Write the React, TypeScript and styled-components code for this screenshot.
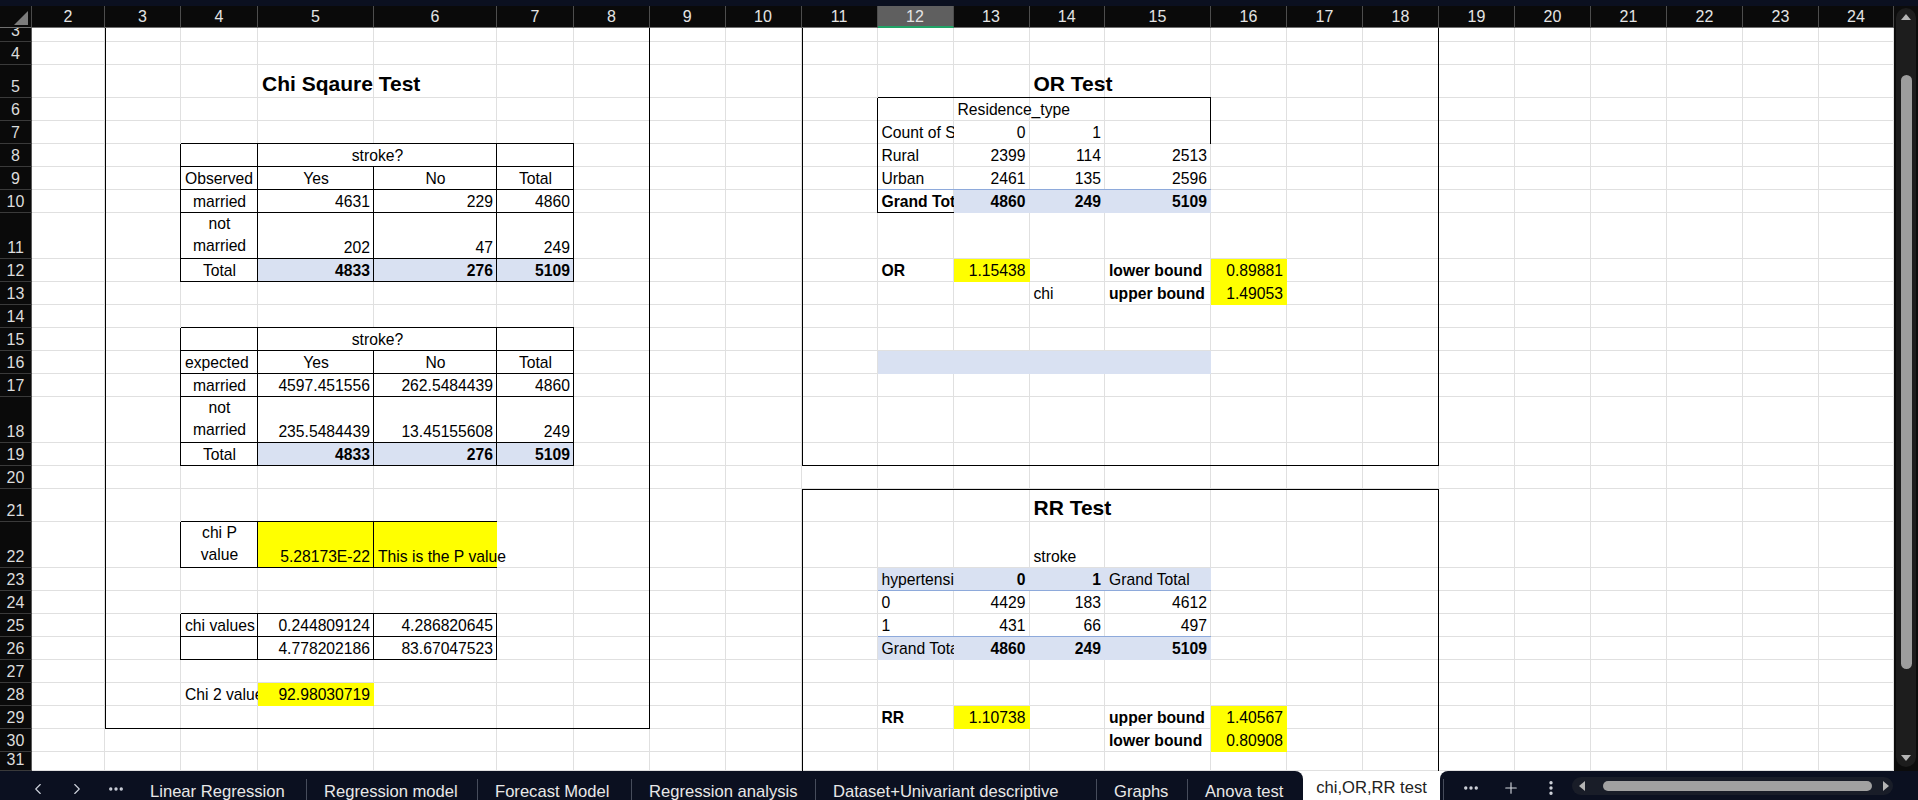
import React from 'react';
import styled, { createGlobalStyle } from 'styled-components';
import { ChevronLeft, ChevronRight, Ellipsis, EllipsisVertical, Plus } from 'lucide-react';

const NAVY = '#0b1020';
const BLUE = '#d9e1f2';
const YEL = '#ffff00';
const PIVOT_LINE = '#8eaadb';
const ALL = 'trbl';

// sheet geometry (px) - first entry is the row header column
const COLS = [32, 73, 76, 77, 116, 123, 77, 76, 75.5, 76, 76, 76, 76, 75.5, 106, 76, 76, 76, 76, 76, 76, 76, 76, 75];
const FIRST_ROW = 3;
const ROW_H = [14, 23, 33, 23, 23, 23, 23, 23, 46, 23, 23, 23, 23, 23, 23, 46, 23, 23, 33, 46, 23, 23, 23, 23, 23, 23, 23, 23, 19];
const COL_NUMS = Array.from({ length: 23 }, (_, i) => i + 2);
const ROW_NUMS = ROW_H.map((_, i) => i + FIRST_ROW);
const SELECTED_COL = 12;

const colTpl = COLS.map(w => `${w}px`).join(' ');
const rowTpl = [22, ...ROW_H].map(h => `${h}px`).join(' ');

const GlobalStyle = createGlobalStyle`
  html, body { margin: 0; padding: 0; background: ${NAVY}; }
  body {
    width: 1918px;
    height: 800px;
    overflow: hidden;
    font-family: "Liberation Sans", Arial, sans-serif;
  }
  * { box-sizing: border-box; }
`;

const Page = styled.div`
  width: 1918px;
  height: 800px;
  display: flex;
  flex-direction: column;
  background: ${NAVY};
`;

const TopStrip = styled.div`
  height: 6px;
  background: ${NAVY};
`;

const Main = styled.div`
  display: flex;
  height: 765px;
`;

const SheetArea = styled.div`
  position: relative;
  width: 1894px;
  height: 765px;
  overflow: hidden;
  background: #fff;
`;

const BaseGrid = styled.div`
  display: grid;
  grid-template-columns: ${colTpl};
  grid-template-rows: ${rowTpl};
`;

const Overlay = styled(BaseGrid)`
  position: absolute;
  inset: 0;
  pointer-events: none;
`;

const Corner = styled.div`
  position: relative;
  background: #0a0a0a;
  border-right: 1px solid #4a4a4a;
  border-bottom: 1px solid #707070;
  &::after {
    content: '';
    position: absolute;
    right: 3px;
    bottom: 2px;
    border-style: solid;
    border-width: 0 0 14px 14px;
    border-color: transparent transparent #7c7c7c transparent;
  }
`;

const ColHead = styled.div<{ $sel: boolean }>`
  background: ${p => (p.$sel ? '#5f5f5f' : '#0a0a0a')};
  color: #e4e4e4;
  font-size: 16px;
  line-height: 21px;
  text-align: center;
  border-right: 1px solid #4d4d4d;
  border-bottom: ${p => (p.$sel ? '2px solid #21a366' : '1px solid #707070')};
`;

const RowHead = styled.div`
  background: #0a0a0a;
  color: #dcdcdc;
  font-size: 16px;
  line-height: 19px;
  display: flex;
  align-items: flex-end;
  justify-content: center;
  padding-bottom: 1px;
  overflow: hidden;
  border-right: 1px solid #5a5a5a;
  border-bottom: 1px solid #3a3a3a;
`;

const GridCell = styled.div`
  background: #fff;
  border-right: 1px solid #e0e0e0;
  border-bottom: 1px solid #e0e0e0;
`;

const Box = styled.div<{ $r1: number; $r2: number; $c1: number; $c2: number; $openTop?: boolean; $openBottom?: boolean }>`
  grid-row: ${p => p.$r1 - 1} / ${p => p.$r2};
  grid-column: ${p => p.$c1} / ${p => p.$c2 + 1};
  border: 1px solid #000;
  border-top-width: ${p => (p.$openTop ? 0 : 1)}px;
  border-bottom-width: ${p => (p.$openBottom ? 0 : 1)}px;
`;

type Align = 'l' | 'c' | 'r';
const ALIGN: Record<Align, string> = { l: 'flex-start', c: 'center', r: 'flex-end' };

const Cell = styled.div<{
  $r: number; $c: number; $cs: number; $a: Align; $b: boolean; $f?: string;
  $sh: string; $spill: boolean; $title: boolean; $multi: boolean;
}>`
  grid-row: ${p => p.$r - 1} / span 1;
  grid-column: ${p => p.$c} / span ${p => p.$cs};
  display: flex;
  flex-direction: column;
  justify-content: flex-end;
  align-items: ${p => ALIGN[p.$a]};
  padding: 0 4px 2px;
  min-width: 0;
  overflow: ${p => (p.$spill ? 'visible' : 'hidden')};
  white-space: nowrap;
  background: ${p => p.$f ?? 'transparent'};
  box-shadow: ${p => p.$sh || 'none'};
  color: #000;
  font-size: ${p => (p.$title ? 21 : 15.7)}px;
  font-weight: ${p => (p.$b ? 700 : 400)};
  line-height: ${p => (p.$title ? 24 : p.$multi ? 22 : 19)}px;
`;

// vertical scrollbar
const VScroll = styled.div`
  width: 24px;
  height: 765px;
  background: #0c0c0c;
  padding: 2px 2px 4px;
`;

const VTrack = styled.div`
  height: 100%;
  border-radius: 10px;
  background: #1d1d1d;
  display: flex;
  flex-direction: column;
  align-items: center;
`;

const Arrow = styled.div`
  height: 18px;
  display: flex;
  align-items: center;
  justify-content: center;
`;

const VThumb = styled.div`
  width: 11px;
  height: 594px;
  margin-top: 49px;
  border-radius: 6px;
  background: #9d9d9d;
`;

const Spacer = styled.div`
  flex: 1;
`;

// sheet tabs
const TabBar = styled.div`
  height: 29px;
  display: flex;
  background: #fff;
`;

const TabStrip = styled.div`
  width: 1303px;
  display: flex;
  align-items: stretch;
  padding-left: 18px;
  background: ${NAVY};
  border-top-right-radius: 8px;
`;

const NavBtn = styled.div`
  width: 39px;
  padding-top: 6px;
  display: flex;
  align-items: center;
  justify-content: center;
  color: #cfd3dc;
`;

const Tab = styled.div<{ $w: number; $first?: boolean }>`
  width: ${p => p.$w}px;
  height: 21px;
  align-self: flex-end;
  padding: 4px 0 0 ${p => (p.$first ? 15 : 17)}px;
  border-left: ${p => (p.$first ? 'none' : '1px solid #464c5b')};
  color: #e8e8e8;
  font-size: 16.6px;
  line-height: 18px;
  white-space: nowrap;
  overflow: hidden;
`;

const ActiveTab = styled.div`
  width: 137px;
  padding-top: 8px;
  background: #fff;
  color: #222;
  font-size: 16.6px;
  line-height: 18px;
  text-align: center;
  white-space: nowrap;
`;

const TabTail = styled.div`
  flex: 1;
  display: flex;
  align-items: center;
  padding-left: 3px;
  background: ${NAVY};
  border-top-left-radius: 8px;
`;

const Sep = styled.div`
  width: 1px;
  height: 21px;
  align-self: flex-end;
  background: #464c5b;
  margin-right: 7px;
`;

const IconBtn = styled.div`
  width: 40px;
  padding-top: 5px;
  display: flex;
  justify-content: center;
  color: #d4d7de;
`;

const HTrack = styled.div`
  width: 321px;
  height: 18px;
  margin-left: 1px;
  padding: 0 3px 0 6px;
  border-radius: 9px;
  background: #191d28;
  display: flex;
  align-items: center;
`;

const HThumb = styled.div`
  flex: 1;
  height: 10px;
  margin: 0 10px 0 17px;
  border-radius: 5px;
  background: #a1a1a1;
`;

type Spec = {
  r: number; c: number; cs?: number; t?: string | string[]; a?: Align; b?: boolean;
  f?: string; bd?: string; pv?: string; spill?: boolean; title?: boolean;
};

const edges = (bd = '', pv = '') => {
  const out: string[] = [];
  const add = (s: string, col: string) => {
    for (const ch of s) {
      if (ch === 't') out.push(`0 -1px 0 0 ${col}`);
      if (ch === 'r') out.push(`inset -1px 0 0 0 ${col}`);
      if (ch === 'b') out.push(`inset 0 -1px 0 0 ${col}`);
      if (ch === 'l') out.push(`-1px 0 0 0 ${col}`);
    }
  };
  add(pv, PIVOT_LINE);
  add(bd, '#000');
  return out.join(', ');
};

type Row = [string | string[], string, string, string];

const contingency = (r0: number, head: string, rows: Row[]): Spec[] => [
  { r: r0, c: 4, bd: ALL },
  { r: r0, c: 5, cs: 2, t: 'stroke?', a: 'c', bd: ALL, f: '#fff' },
  { r: r0, c: 7, bd: ALL },
  { r: r0 + 1, c: 4, t: head, bd: ALL },
  { r: r0 + 1, c: 5, t: 'Yes', a: 'c', bd: ALL },
  { r: r0 + 1, c: 6, t: 'No', a: 'c', bd: ALL },
  { r: r0 + 1, c: 7, t: 'Total', a: 'c', bd: ALL },
  ...rows.flatMap(([lab, y, n, tot], i): Spec[] => {
    const last = i === rows.length - 1;
    const f = last ? BLUE : undefined;
    const r = r0 + 2 + i;
    return [
      { r, c: 4, t: lab, a: 'c', bd: ALL },
      { r, c: 5, t: y, a: 'r', bd: ALL, b: last, f },
      { r, c: 6, t: n, a: 'r', bd: ALL, b: last, f },
      { r, c: 7, t: tot, a: 'r', bd: ALL, b: last, f },
    ];
  }),
];

const pivotRow = (r: number, vals: string[], extra: Partial<Spec> = {}): Spec[] =>
  vals.map((v, i) => ({ r, c: 13 + i, t: v, a: 'r', ...extra }));

const CELLS: Spec[] = [
  // chi square
  { r: 5, c: 5, t: 'Chi Sqaure Test', b: true, title: true, spill: true },
  ...contingency(8, 'Observed', [
    ['married', '4631', '229', '4860'],
    [['not', 'married'], '202', '47', '249'],
    ['Total', '4833', '276', '5109'],
  ]),
  ...contingency(15, 'expected', [
    ['married', '4597.451556', '262.5484439', '4860'],
    [['not', 'married'], '235.5484439', '13.45155608', '249'],
    ['Total', '4833', '276', '5109'],
  ]),
  { r: 22, c: 4, t: ['chi P', 'value'], a: 'c', bd: ALL },
  { r: 22, c: 5, t: '5.28173E-22', a: 'r', f: YEL, bd: ALL },
  { r: 22, c: 6, t: 'This is the P value', f: YEL, bd: 'tb', spill: true },
  { r: 25, c: 4, t: 'chi values', bd: ALL },
  { r: 25, c: 5, t: '0.244809124', a: 'r', bd: ALL },
  { r: 25, c: 6, t: '4.286820645', a: 'r', bd: ALL },
  { r: 26, c: 4, bd: ALL },
  { r: 26, c: 5, t: '4.778202186', a: 'r', bd: ALL },
  { r: 26, c: 6, t: '83.67047523', a: 'r', bd: ALL },
  { r: 28, c: 4, t: 'Chi 2 value' },
  { r: 28, c: 5, t: '92.98030719', a: 'r', f: YEL },

  // odds ratio
  { r: 5, c: 14, t: 'OR Test', b: true, title: true, spill: true },
  { r: 6, c: 12, bd: 'tl' },
  { r: 6, c: 13, t: 'Residence_type', bd: 't', spill: true },
  { r: 6, c: 14, bd: 't' },
  { r: 6, c: 15, bd: 'tr' },
  { r: 7, c: 12, t: 'Count of Stroke', bd: 'l' },
  { r: 7, c: 13, t: '0', a: 'r' },
  { r: 7, c: 14, t: '1', a: 'r' },
  { r: 7, c: 15, bd: 'r' },
  { r: 8, c: 12, t: 'Rural', bd: 'l' },
  ...pivotRow(8, ['2399', '114', '2513']),
  { r: 9, c: 12, t: 'Urban', bd: 'l' },
  ...pivotRow(9, ['2461', '135', '2596']),
  { r: 10, c: 12, t: 'Grand Total', b: true, bd: 'lb', pv: 't' },
  ...pivotRow(10, ['4860', '249', '5109'], { b: true, f: BLUE, pv: 't' }),
  { r: 12, c: 12, t: 'OR', b: true },
  { r: 12, c: 13, t: '1.15438', a: 'r', f: YEL },
  { r: 12, c: 15, t: 'lower bound', b: true },
  { r: 12, c: 16, t: '0.89881', a: 'r', f: YEL },
  { r: 13, c: 14, t: 'chi' },
  { r: 13, c: 15, t: 'upper bound', b: true },
  { r: 13, c: 16, t: '1.49053', a: 'r', f: YEL },
  { r: 16, c: 12, cs: 4, f: BLUE },

  // relative risk
  { r: 21, c: 14, t: 'RR Test', b: true, title: true, spill: true },
  { r: 22, c: 14, t: 'stroke' },
  { r: 23, c: 12, t: 'hypertension', f: BLUE, pv: 'b' },
  { r: 23, c: 13, t: '0', a: 'r', b: true, f: BLUE, pv: 'b' },
  { r: 23, c: 14, t: '1', a: 'r', b: true, f: BLUE, pv: 'b' },
  { r: 23, c: 15, t: 'Grand Total', f: BLUE, pv: 'b' },
  { r: 24, c: 12, t: '0' },
  ...pivotRow(24, ['4429', '183', '4612']),
  { r: 25, c: 12, t: '1' },
  ...pivotRow(25, ['431', '66', '497']),
  { r: 26, c: 12, t: 'Grand Total', f: BLUE, pv: 't' },
  ...pivotRow(26, ['4860', '249', '5109'], { b: true, f: BLUE, pv: 't' }),
  { r: 29, c: 12, t: 'RR', b: true },
  { r: 29, c: 13, t: '1.10738', a: 'r', f: YEL },
  { r: 29, c: 15, t: 'upper bound', b: true },
  { r: 29, c: 16, t: '1.40567', a: 'r', f: YEL },
  { r: 30, c: 15, t: 'lower bound', b: true },
  { r: 30, c: 16, t: '0.80908', a: 'r', f: YEL },
].sort((a, b) => a.r - b.r || a.c - b.c);

const TABS: { name: string; w: number }[] = [
  { name: 'Linear Regression', w: 171 },
  { name: 'Regression model', w: 171 },
  { name: 'Forecast Model', w: 154 },
  { name: 'Regression analysis', w: 184 },
  { name: 'Dataset+Univariant descriptive', w: 281 },
  { name: 'Graphs', w: 91 },
  { name: 'Anova test', w: 116 },
];

const Tri = ({ dir }: { dir: 'up' | 'down' | 'left' | 'right' }) => {
  const pts = {
    up: '0,7 5,1 10,7',
    down: '0,1 5,7 10,1',
    left: '7,0 1,5 7,10',
    right: '1,0 7,5 1,10',
  }[dir];
  const vertical = dir === 'up' || dir === 'down';
  return (
    <svg width={vertical ? 10 : 8} height={vertical ? 8 : 10} viewBox={vertical ? '0 0 10 8' : '0 0 8 10'}>
      <polygon points={pts} fill="#b4b4b4" />
    </svg>
  );
};

const App = () => (
  <Page>
    <GlobalStyle />
    <TopStrip />
    <Main>
      <SheetArea>
        <BaseGrid>
          <Corner />
          {COL_NUMS.map(c => (
            <ColHead key={c} $sel={c === SELECTED_COL}>{c}</ColHead>
          ))}
          {ROW_NUMS.map(r => (
            <React.Fragment key={r}>
              <RowHead>{r}</RowHead>
              {COL_NUMS.map(c => <GridCell key={c} />)}
            </React.Fragment>
          ))}
        </BaseGrid>
        <Overlay>
          <Box $r1={3} $r2={29} $c1={3} $c2={8} $openTop />
          <Box $r1={3} $r2={19} $c1={11} $c2={18} $openTop />
          <Box $r1={21} $r2={31} $c1={11} $c2={18} $openBottom />
          {CELLS.map((s, i) => (
            <Cell
              key={i}
              $r={s.r}
              $c={s.c}
              $cs={s.cs ?? 1}
              $a={s.a ?? 'l'}
              $b={!!s.b}
              $f={s.f}
              $sh={edges(s.bd, s.pv)}
              $spill={!!s.spill}
              $title={!!s.title}
              $multi={Array.isArray(s.t)}
            >
              {Array.isArray(s.t) ? s.t.map(l => <span key={l}>{l}</span>) : s.t && <span>{s.t}</span>}
            </Cell>
          ))}
        </Overlay>
      </SheetArea>
      <VScroll>
        <VTrack>
          <Arrow><Tri dir="up" /></Arrow>
          <VThumb />
          <Spacer />
          <Arrow><Tri dir="down" /></Arrow>
        </VTrack>
      </VScroll>
    </Main>
    <TabBar>
      <TabStrip>
        <NavBtn><ChevronLeft size={18} strokeWidth={1.5} /></NavBtn>
        <NavBtn><ChevronRight size={18} strokeWidth={1.5} /></NavBtn>
        <NavBtn><Ellipsis size={18} strokeWidth={2.5} /></NavBtn>
        {TABS.map((t, i) => (
          <Tab key={t.name} $w={t.w} $first={i === 0}>{t.name}</Tab>
        ))}
      </TabStrip>
      <ActiveTab>chi,OR,RR test</ActiveTab>
      <TabTail>
        <Sep />
        <IconBtn><Ellipsis size={18} strokeWidth={2.5} /></IconBtn>
        <IconBtn><Plus size={18} strokeWidth={1.5} /></IconBtn>
        <IconBtn><EllipsisVertical size={18} strokeWidth={2.5} /></IconBtn>
        <HTrack>
          <Tri dir="left" />
          <HThumb />
          <Tri dir="right" />
        </HTrack>
      </TabTail>
    </TabBar>
  </Page>
);

export default App;
